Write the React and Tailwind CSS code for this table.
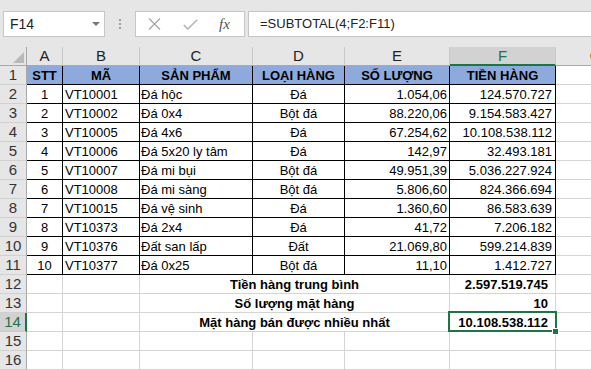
const items = [
  ['1', 'VT10001', 'Đá hộc', 'Đá', '1.054,06', '124.570.727'],
  ['2', 'VT10002', 'Đá 0x4', 'Bột đá', '88.220,06', '9.154.583.427'],
  ['3', 'VT10005', 'Đá 4x6', 'Đá', '67.254,62', '10.108.538.112'],
  ['4', 'VT10006', 'Đá 5x20 ly tâm', 'Đá', '142,97', '32.493.181'],
  ['5', 'VT10007', 'Đá mi bụi', 'Bột đá', '49.951,39', '5.036.227.924'],
  ['6', 'VT10008', 'Đá mi sàng', 'Bột đá', '5.806,60', '824.366.694'],
  ['7', 'VT10015', 'Đá vệ sinh', 'Đá', '1.360,60', '86.583.639'],
  ['8', 'VT10373', 'Đá 2x4', 'Đá', '41,72', '7.206.182'],
  ['9', 'VT10376', 'Đất san lấp', 'Đất', '21.069,80', '599.214.839'],
  ['10', 'VT10377', 'Đá 0x25', 'Bột đá', '11,10', '1.412.727'],
]

const summary = [
  ['12', 'Tiền hàng trung bình', '2.597.519.745'],
  ['13', 'Số lượng mặt hàng', '10'],
  ['14', 'Mặt hàng bán được nhiều nhất', '10.108.538.112'],
]

const cell = 'h-[19px] border-r border-b whitespace-nowrap overflow-hidden text-[13px] leading-[20px] text-black'
const tcell = cell + ' border-black'
const gcell = cell + ' border-[#d4d4d4]'

function RowHead({ n, active }) {
  return (
    <div
      className={
        active
          ? 'h-[19px] bg-[#d2d2d2] border-b border-b-[#c8c8c8] border-r-2 border-r-[#217346] text-center text-[15px] leading-[18px] text-[#217346]'
          : 'h-[19px] bg-[#e6e6e6] border-b border-b-[#d0d0d0] border-r border-r-[#a9a9a9] text-center text-[15px] leading-[18px] text-[#333]'
      }
    >
      {n}
    </div>
  )
}

function ColHead({ label, active }) {
  return (
    <div
      className={
        active
          ? 'h-[19px] bg-[#d2d2d2] border-r border-r-[#c8c8c8] border-b-2 border-b-[#217346] text-center text-[15px] leading-[18px] text-[#217346]'
          : 'h-[19px] bg-[#e6e6e6] border-r border-r-[#c8c8c8] border-b border-b-[#a9a9a9] text-center text-[15px] leading-[18px] text-[#222] whitespace-nowrap'
      }
    >
      {label}
    </div>
  )
}

export default function App() {
  return (
    <div className="w-[591px] h-[370px] overflow-hidden bg-white font-['Liberation_Sans',Arial,sans-serif]">
      {/* formula bar */}
      <div className="h-[47px] bg-[#e6e6e6] flex items-start pt-[11px]">
        <div className="ml-[3px] w-[102px] h-[26px] bg-white border border-[#c6c6c6] flex items-center justify-between pl-[6px] pr-[4px]">
          <span className="text-[14px] text-[#222]">F14</span>
          <svg width="8" height="4" viewBox="0 0 8 4">
            <path d="M0 0h8L4 4z" fill="#777" />
          </svg>
        </div>
        <div className="w-[30px] h-[26px] flex flex-col items-center justify-center gap-[2px]">
          <span className="w-[2px] h-[2px] bg-[#a0a0a0]" />
          <span className="w-[2px] h-[2px] bg-[#a0a0a0]" />
          <span className="w-[2px] h-[2px] bg-[#a0a0a0]" />
        </div>
        <div className="w-[110px] h-[26px] bg-white border border-[#c6c6c6] flex items-center pl-[12px]">
          <svg width="13" height="12" viewBox="0 0 13 12">
            <path d="M1 0.5l11 11M12 0.5l-11 11" stroke="#a8a8a8" strokeWidth="1.4" fill="none" />
          </svg>
          <svg className="ml-[22px]" width="15" height="11" viewBox="0 0 15 11">
            <path d="M0.8 6l4 4L14.2 0.8" stroke="#b4b4b4" strokeWidth="1.6" fill="none" />
          </svg>
          <span className="ml-[21px] font-['Liberation_Serif',serif] italic text-[15px] leading-none text-[#555]">fx</span>
        </div>
        <div className="ml-[3px] flex-1 h-[26px] bg-white border border-r-0 border-[#c6c6c6] flex items-center pl-[11px] text-[13px] text-[#222]">
          =SUBTOTAL(4;F2:F11)
        </div>
      </div>

      {/* sheet */}
      <div className="grid grid-cols-[27px_36px_77px_113px_92px_105px_106px_80px] auto-rows-[19px]">
        <div className="h-[19px] bg-[#e6e6e6] border-r border-r-[#a9a9a9] border-b border-b-[#a9a9a9] flex items-end justify-end pr-[2px] pb-[2px]">
          <svg width="11" height="11" viewBox="0 0 11 11">
            <path d="M11 0V11H0z" fill="#b9b9b9" />
          </svg>
        </div>
        {['A', 'B', 'C', 'D', 'E', 'F', 'G'].map((c) => (
          <ColHead key={c} label={c} active={c === 'F'} />
        ))}

        <RowHead n="1" />
        {['STT', 'MÃ', 'SẢN PHẨM', 'LOẠI HÀNG', 'SỐ LƯỢNG', 'TIỀN HÀNG'].map((h) => (
          <div key={h} className={tcell + ' bg-[#8ea9db] font-bold text-center'}>
            {h}
          </div>
        ))}
        <div className={gcell} />

        {items.map((r, i) => (
          <div key={r[1]} className="contents">
            <RowHead n={i + 2} />
            <div className={tcell + ' text-center'}>{r[0]}</div>
            <div className={tcell + ' pl-[2px]'}>{r[1]}</div>
            <div className={tcell + ' pl-[1px]'}>{r[2]}</div>
            <div className={tcell + ' text-center'}>{r[3]}</div>
            <div className={tcell + ' text-right pr-[2px]'}>{r[4]}</div>
            <div className={tcell + ' text-right pr-[3px]'}>{r[5]}</div>
            <div className={gcell} />
          </div>
        ))}

        {summary.map(([n, label, value]) => (
          <div key={n} className="contents">
            <RowHead n={n} active={n === '14'} />
            <div className={gcell} />
            <div className={gcell} />
            <div className={gcell + ' col-span-3 text-center font-bold'}>{label}</div>
            {n === '14' ? (
              <div className="relative h-[19px] border-r border-b border-[#d4d4d4] whitespace-nowrap text-[13px] leading-[20px] text-black text-right pr-[7px] font-bold">
                {value}
                <div className="absolute z-10 -left-[2px] -top-[2px] w-[109px] h-[21px] border-2 border-[#217346]" />
                <div className="absolute z-20 left-[102px] top-[15px] w-[7px] h-[7px] bg-[#217346] border border-white" />
              </div>
            ) : (
              <div className={gcell + ' text-right pr-[7px] font-bold'}>{value}</div>
            )}
            <div className={gcell} />
          </div>
        ))}

        {['15', '16'].map((n) => (
          <div key={n} className="contents">
            <RowHead n={n} />
            <div className={gcell} />
            <div className={gcell} />
            <div className={gcell} />
            <div className={gcell} />
            <div className={gcell} />
            <div className={gcell} />
            <div className={gcell} />
          </div>
        ))}
      </div>
    </div>
  )
}
